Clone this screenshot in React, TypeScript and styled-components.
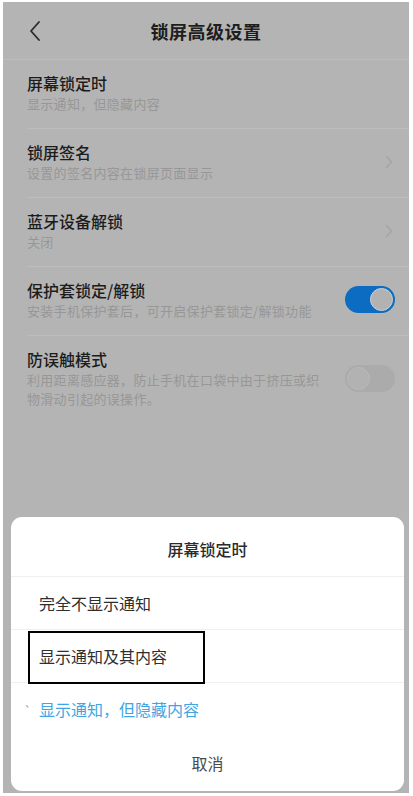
import styled, { createGlobalStyle } from "styled-components";

const GlobalStyle = createGlobalStyle`
  html, body {
    margin: 0;
    padding: 0;
    background: #ffffff;
  }
  body {
    font-family: "Noto Sans CJK SC", "Noto Sans", sans-serif;
  }
`;

type Setting = {
  title: string;
  desc: string;
  kind: "none" | "arrow" | "on" | "off";
};

const settings: Setting[] = [
  { title: "屏幕锁定时", desc: "显示通知，但隐藏内容", kind: "none" },
  { title: "锁屏签名", desc: "设置的签名内容在锁屏页面显示", kind: "arrow" },
  { title: "蓝牙设备解锁", desc: "关闭", kind: "arrow" },
  { title: "保护套锁定/解锁", desc: "安装手机保护套后，可开启保护套锁定/解锁功能", kind: "on" },
  {
    title: "防误触模式",
    desc: "利用距离感应器，防止手机在口袋中由于挤压或织物滑动引起的误操作。",
    kind: "off",
  },
];

function App() {
  return (
    <>
      <GlobalStyle />
      <Screen>
        <Header>
          <BackButton>
            <svg width="14" height="22" viewBox="0 0 14 22">
              <path d="M11 2 L3 11 L11 20" fill="none" stroke="#2a2a2a" strokeWidth="1.8" strokeLinecap="round" strokeLinejoin="round" />
            </svg>
          </BackButton>
          <HeaderTitle>锁屏高级设置</HeaderTitle>
        </Header>

        <List>
          {settings.map((s, i) => (
            <Row key={s.title} last={i === settings.length - 1}>
              <RowText>
                <RowTitle>{s.title}</RowTitle>
                <RowDesc>{s.desc}</RowDesc>
              </RowText>
              {s.kind === "arrow" && (
                <Arrow>
                  <svg width="8" height="14" viewBox="0 0 8 14">
                    <path d="M1.5 1.5 L6.5 7 L1.5 12.5" fill="none" stroke="#a4a4a4" strokeWidth="1.3" strokeLinecap="round" strokeLinejoin="round" />
                  </svg>
                </Arrow>
              )}
              {s.kind === "on" && (
                <Switch on>
                  <Knob on />
                </Switch>
              )}
              {s.kind === "off" && (
                <Switch>
                  <Knob />
                </Switch>
              )}
            </Row>
          ))}
        </List>

        <Sheet>
          <SheetTitle>屏幕锁定时</SheetTitle>
          <Option>完全不显示通知</Option>
          <Option>
            显示通知及其内容
            <Marker />
          </Option>
          <Option active last>
            <Tick>、</Tick>
            显示通知，但隐藏内容
          </Option>
          <Cancel>取消</Cancel>
        </Sheet>
      </Screen>
    </>
  );
}

const Screen = styled.div`
  width: 406px;
  height: 791px;
  margin: 2px 4px 3px 3px;
  background: #b4b4b4;
  display: flex;
  flex-direction: column;
  overflow: hidden;
`;

const Header = styled.div`
  height: 57px;
  flex-shrink: 0;
  display: flex;
  align-items: center;
  justify-content: center;
  position: relative;
  border-bottom: 1px solid #bdbdbd;
`;

const BackButton = styled.div`
  position: absolute;
  left: 25px;
  top: 18px;
  display: flex;
`;

const HeaderTitle = styled.div`
  font-size: 18px;
  font-weight: 700;
  color: #1e1e1e;
  letter-spacing: 0.5px;
`;

const List = styled.div`
  display: flex;
  flex-direction: column;
  padding-left: 24px;
`;

const Row = styled.div<{ last?: boolean }>`
  display: flex;
  align-items: center;
  gap: 14px;
  padding: 12px 14px 15px 0;
  border-bottom: ${(p) => (p.last ? "none" : "1px solid #bdbdbd")};
  min-height: 41px;
`;

const RowText = styled.div`
  flex: 1;
  display: flex;
  flex-direction: column;
`;

const RowTitle = styled.div`
  font-size: 16px;
  line-height: 22px;
  font-weight: 500;
  color: #1c1c1c;
`;

const RowDesc = styled.div`
  font-size: 13px;
  line-height: 19px;
  color: #979797;
  letter-spacing: 0.3px;
`;

const Arrow = styled.div`
  display: flex;
  align-items: center;
  margin-right: 2px;
`;

const Switch = styled.div<{ on?: boolean }>`
  width: 50px;
  height: 27px;
  border-radius: 14px;
  flex-shrink: 0;
  box-sizing: border-box;
  padding: 2px;
  display: flex;
  justify-content: ${(p) => (p.on ? "flex-end" : "flex-start")};
  background: ${(p) => (p.on ? "#0b6cc1" : "#ababab")};
`;

const Knob = styled.div<{ on?: boolean }>`
  width: 23px;
  height: 23px;
  border-radius: 50%;
  box-sizing: border-box;
  background: #b2b2b2;
  border: 1.5px solid ${(p) => (p.on ? "#d2d2d2" : "#b9b9b9")};
`;

const Sheet = styled.div`
  margin: auto 5px 2px 8px;
  background: #ffffff;
  border-radius: 11px;
  display: flex;
  flex-direction: column;
`;

const SheetTitle = styled.div`
  height: 60px;
  padding-top: 4px;
  box-sizing: border-box;
  display: flex;
  align-items: center;
  justify-content: center;
  font-size: 16px;
  font-weight: 500;
  color: #2b2b2b;
  border-bottom: 1px solid #f0f0f0;
`;

const Option = styled.div<{ active?: boolean; last?: boolean }>`
  position: relative;
  height: 52px;
  display: flex;
  align-items: center;
  padding-left: 28px;
  font-size: 16px;
  color: ${(p) => (p.active ? "#3ea7e3" : "#2f2f2f")};
  border-bottom: ${(p) => (p.last ? "none" : "1px solid #f0f0f0")};
`;

const Tick = styled.span`
  position: absolute;
  left: 14px;
  top: 12px;
  font-size: 10px;
  color: #3ea7e3;
`;

const Marker = styled.div`
  position: absolute;
  left: 17px;
  top: 1px;
  width: 177px;
  height: 53px;
  box-sizing: border-box;
  border: 2px solid #000000;
`;

const Cancel = styled.div`
  height: 56px;
  display: flex;
  align-items: center;
  justify-content: center;
  font-size: 16px;
  color: #4a4a4a;
`;

export default App;
